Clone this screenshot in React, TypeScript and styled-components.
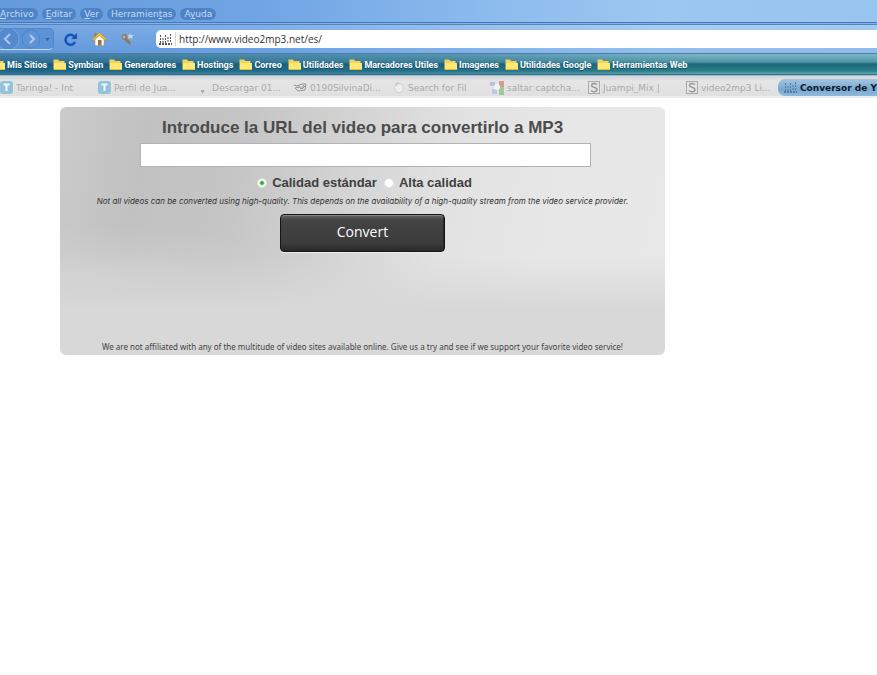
import React, { useState } from "react";
import styled, { createGlobalStyle, css } from "styled-components";

const GlobalStyle = createGlobalStyle`
  * { box-sizing: border-box; }
  body { margin: 0; background: #fefefe; overflow-x: hidden; }
`;

const Browser = styled.div`
  font-family: "DejaVu Sans", sans-serif;
  font-size: 10px;
`;

const Chrome = styled.header`
  overflow: hidden;
  background: linear-gradient(90deg, #659adc 0%, #70a5e5 30%, #8bbaed 55%, #9cc7f1 75%, #98c4f0 100%);
`;

const MenuBar = styled.nav`
  display: flex;
  gap: 4px;
  height: 22px;
  padding-top: 8px;
  margin-left: -4px;
`;

const MenuButton = styled.button`
  height: 12px;
  padding: 0 4px;
  border: 0;
  border-radius: 6px;
  background: #4e84c6;
  color: #c3dbf5;
  font: 9px/12px "DejaVu Sans", sans-serif;
  white-space: nowrap;
`;

const NavBar = styled.div`
  display: flex;
  align-items: center;
  height: 31px;
  border-top: 1px solid #4478b9;
  box-shadow: inset 0 1px #86b1e3, inset 0 2px #5585c0;
  background: linear-gradient(180deg, #ffffff22, #3f7cc922);
  padding-top: 2px;
`;

const HistoryGroup = styled.div`
  display: flex;
  align-items: center;
  width: 54px;
  height: 22px;
  margin-right: 8px;
  border: 1px solid #5287ca;
  border-left: 0;
  border-bottom-color: #c0dbf6;
  border-radius: 0 5px 5px 0;
  background: #5c92d6;
`;

const IconButton = styled.button<{ $width: number }>`
  display: flex;
  align-items: center;
  justify-content: center;
  width: ${(p) => p.$width}px;
  height: 20px;
  padding: 0;
  border: 0;
  background: none;
`;

const AddressField = styled.div`
  display: flex;
  flex: 1;
  align-items: center;
  height: 18px;
  margin-left: 20px;
  padding-left: 3px;
  gap: 3px;
  border-radius: 5px 0 0 5px;
  background: #fff;
`;

const AddressDivider = styled.span`
  width: 1px;
  height: 14px;
  background: #d4d4d4;
`;

const AddressInput = styled.input`
  flex: 1;
  min-width: 0;
  height: 16px;
  padding: 0;
  border: 0;
  outline: 0;
  background: none;
  color: #333;
  font: 10px/16px "Open Sans", sans-serif;
`;

const BookmarkBar = styled.nav`
  display: flex;
  align-items: center;
  gap: 6px;
  height: 22px;
  padding-top: 2px;
  margin-left: -8px;
  border-top: 1px solid #477fa9;
  border-bottom: 1px solid #2f718c;
  background:
    linear-gradient(90deg, #12508890, #1a5c8a60 50%, transparent 80%),
    linear-gradient(180deg, #80b6c4 0, #4f96a8 8px, #1a6777 10px, #2b8089 17px, #63a9b3 20px);
`;

const BookmarkLink = styled.a`
  display: flex;
  align-items: center;
  gap: 2px;
  color: #fff;
  font: bold 9px/14px Roboto, sans-serif;
  text-decoration: none;
  white-space: nowrap;
  text-shadow: 0 1px #164b68;
`;

const TabStrip = styled.div`
  display: flex;
  height: 23px;
  padding-top: 3px;
  border-bottom: 2px solid #ededed;
  border-top: 1px solid #a9bac4;
  background: linear-gradient(180deg, #cfd5d9, #e5e5e5 5px, #e0e0e0);
  overflow: hidden;
`;

const Tab = styled.button<{ $active?: boolean }>`
  display: flex;
  flex: 0 0 98px;
  align-items: center;
  gap: 3px;
  height: 17px;
  padding: 0;
  border: 0;
  background: none;
  color: #aaa;
  font: 9px/16px "DejaVu Sans", sans-serif;
  white-space: nowrap;
  overflow: hidden;
  svg { flex: none; }
  ${(p) =>
    p.$active &&
    css`
      flex: 1 0 98px;
      margin-left: -6px;
      padding-left: 6px;
      border-radius: 7px 0 0 7px;
      background: linear-gradient(180deg, #a5c5e1, #78a8d1 60%, #8fb9dc);
      color: #10182a;
      font-weight: bold;
    `}
`;

const Page = styled.main`
  padding: 9px 60px;
`;

const Converter = styled.form`
  display: flex;
  flex-direction: column;
  align-items: center;
  max-width: 605px;
  min-height: 248px;
  padding: 11px 8px 3px;
  border-radius: 6px;
  color: #4c4c4c;
  font-family: "Liberation Sans", Arial, sans-serif;
  background:
    linear-gradient(180deg, transparent 60%, #d8d8d8 82%),
    radial-gradient(ellipse 280px 50px at 0 68%, #d0d0d0, transparent),
    linear-gradient(102deg, #cbcbcb 0%, #c1c1c1 14%, #c6c6c6 30%, #d4d4d4 46%, #e2e2e2 62%, #e7e7e7 78%, #e8e8e8 100%);
`;

const Title = styled.label`
  font-size: 17px;
  font-weight: bold;
  line-height: 20px;
`;

const UrlInput = styled.input`
  width: 451px;
  max-width: 100%;
  height: 24px;
  margin: 5px 0 8px;
  margin-left: 6px;
  padding: 2px 4px;
  border: 1px solid #b2b2b2;
  outline: 0;
  background: #fff;
`;

const Choices = styled.div`
  display: flex;
  gap: 7px;
  padding-left: 4px;
`;

const Choice = styled.label`
  display: flex;
  align-items: center;
  gap: 5px;
  color: #404040;
  font-size: 13px;
  font-weight: bold;
  line-height: 16px;
`;

const Radio = styled.input`
  appearance: none;
  width: 10px;
  height: 10px;
  margin: 0;
  border: 1px solid #e0e5e0;
  border-radius: 50%;
  background: #fff;
  &:checked {
    border-color: #d5ecd5;
    background: radial-gradient(circle, #43954a 0 1px, #f4fff4 3px);
  }
`;

const Hint = styled.p`
  margin: 5px 0 8px;
  color: #333;
  font: italic 8px/10px Inter, sans-serif;
`;

const ConvertButton = styled.button`
  width: 165px;
  height: 38px;
  padding: 0 0 2px;
  border: 1px solid #151515;
  border-radius: 4px;
  background: linear-gradient(180deg, #676767 0, #444 5px, #3c3c3c 28px, #292929 100%);
  box-shadow: inset 0 1px #858585, inset -1px 0 #272727, 0 1px #eee;
  color: #fff;
  font: 14px/20px "Open Sans", sans-serif;
`;

const Disclaimer = styled.p`
  margin: auto 0 0;
  color: #444;
  font: 8px/10px "Noto Sans", sans-serif;
`;

const BackIcon = () => (
  <svg width="22" height="20" viewBox="0 0 22 20">
    <circle cx="8" cy="10" r="11" fill="#5489cd" stroke="#74a4df" />
    <path d="M10 5 5 10l5 5" fill="none" stroke="#a9c9ed" strokeWidth="2" />
  </svg>
);
const ForwardIcon = () => (
  <svg width="20" height="20" viewBox="0 0 20 20">
    <circle cx="9" cy="10" r="9" fill="#6094d6" stroke="#5084c8" />
    <path d="m8 6 4 4-4 4" fill="none" stroke="#aecbed" strokeWidth="2" />
  </svg>
);
const CaretIcon = () => (
  <svg width="5" height="3" viewBox="0 0 6 4"><path d="M0 0h6L3 4Z" fill="#2f65ae" /></svg>
);
const ReloadIcon = () => (
  <svg width="15" height="15" viewBox="0 0 15 15">
    <path d="M11 4.2A5 5 0 1 0 12 10" fill="none" stroke="#1553b8" strokeWidth="2.5" />
    <path d="M14 1v6H8Z" fill="#1553b8" />
  </svg>
);
const HomeIcon = () => (
  <svg width="15" height="14" viewBox="0 0 15 14">
    <path d="M3 7v6.5h9V7L7.500 3Z" fill="#fffbe7" stroke="#a19a8c" strokeWidth=".6" />
    <path d="M2.500 1.500h2v3h-2Z" fill="#a76f28" />
    <path d="M7.500.5 15 7.500l-1.300 1L7.500 3.500 1.300 8.500 0 7.500Z" fill="#f5c63d" stroke="#a57828" strokeWidth=".5" />
    <path d="M6 8h3.500v5.500H6Z" fill="#9b7147" />
  </svg>
);
const ToolsIcon = () => (
  <svg width="13" height="13" viewBox="0 0 13 13">
    <circle cx="3.500" cy="4" r="3" fill="#8b8071" /><circle cx="3" cy="4" r="1" fill="#d2d1c9" />
    <path d="m5 5 5 4-1 3-5-4Z" fill="#94785a" />
    <path d="m9 0 .8 2 2.700 0-1.500 2 .8 2-2.600-1-2.200 1 .6-2.200L6 2.500l2-.3Z" fill="#cfd5da" />
  </svg>
);
const FolderIcon = () => (
  <svg width="13" height="12" viewBox="0 0 13 12">
    <path d="M.5.5h4.500l1.300 1.500h5.200v8.500H.5Z" fill="#f4d35a" />
    <path d="M1 4h12v7H1Z" fill="#ffe873" />
    <path d="M1 10h12v1H1Z" fill="#e5b942" />
  </svg>
);
const BarsIcon = ({ color = "#555" }: { color?: string }) => (
  <svg width="13" height="13" viewBox="0 0 13 13">
    <path d="M1.500 2v8M4 5v5M6.500 2v8M9 4v6M11.500 1v9" stroke={color} strokeDasharray="2 1" />
    <path d="M0 11h13" stroke={color} strokeWidth="2" strokeDasharray="2 1" />
  </svg>
);
const TaringaIcon = () => (
  <svg width="13" height="13" viewBox="0 0 13 13">
    <rect width="13" height="13" rx="3" fill="#94c2da" />
    <path d="M3.500 3.500h6M6.500 3.500V10" stroke="#edf8fc" strokeWidth="2" />
  </svg>
);
const DotIcon = () => (
  <svg width="13" height="13" viewBox="0 0 13 13"><path d="M5 9h3v2L6 13v-2H5Z" fill="#aaa" /></svg>
);
const SketchIcon = () => (
  <svg width="13" height="13" viewBox="0 0 13 13">
    <path d="m0 4 3 1 5-2h4l-1 6-7 1-3-3 5-1M5 5l2 3 3-4M8 8l4-4" fill="none" stroke="#969696" strokeWidth="1" />
  </svg>
);
const RingIcon = () => (
  <svg width="13" height="13" viewBox="0 0 13 13">
    <circle cx="7" cy="7" r="4.500" fill="#eee" stroke="#cecece" /><path d="M3 3 7 1l-2 4" fill="#c3c3c3" />
  </svg>
);
const SearchIcon = () => (
  <svg width="14" height="14" viewBox="0 0 14 14">
    <path d="M0 1h5v4H0Z" fill="#b7c4e1" /><path d="M9 0h5v6H9Z" fill="#d59a98" />
    <path d="M9 6h5v8H9Z" fill="#9fc8a1" /><path d="M2 8h5v5H2Z" fill="#b9c7e8" />
    <circle cx="7" cy="6" r="3" fill="#f3f3ed" />
  </svg>
);
const SIcon = () => (
  <svg width="12" height="13" viewBox="0 0 12 13">
    <rect x=".5" y=".5" width="11" height="12" fill="#e5e5e5" stroke="#aaa" />
    <path d="M9 3.500C7 2 3.500 2.200 3.500 4.500S9 6 9 8.500 5 11.500 3 9.500" fill="none" stroke="#989898" strokeWidth="1.500" />
  </svg>
);

const menus: [string, string, string][] = [
  ["", "A", "rchivo"], ["", "E", "ditar"], ["", "V", "er"], ["Herramien", "t", "as"], ["A", "y", "uda"],
];
const bookmarks = ["Mis Sitios", "Symbian", "Generadores", "Hostings", "Correo", "Utilidades", "Marcadores Utiles", "Imagenes", "Utilidades Google", "Herramientas Web"];
const tabs = [
  { title: "Taringa! - Int", icon: <TaringaIcon /> },
  { title: "Perfil de Jua...", icon: <TaringaIcon /> },
  { title: "Descargar 01...", icon: <DotIcon /> },
  { title: "0190SilvinaDi...", icon: <SketchIcon /> },
  { title: "Search for Fil", icon: <RingIcon /> },
  { title: "saltar captcha...", icon: <SearchIcon /> },
  { title: "Juampi_Mix |", icon: <SIcon /> },
  { title: "video2mp3 Li...", icon: <SIcon /> },
  { title: "Conversor de Y", icon: <BarsIcon color="#5279a1" />, active: true },
];

export default function App() {
  const [quality, setQuality] = useState("standard");
  return (
    <Browser>
      <GlobalStyle />
      <Chrome>
        <MenuBar>
          {menus.map(([before, key, after]) => (
            <MenuButton key={before + key + after}>{before}<u>{key}</u>{after}</MenuButton>
          ))}
        </MenuBar>
        <NavBar>
          <HistoryGroup>
            <IconButton $width={22} aria-label="Atrás"><BackIcon /></IconButton>
            <IconButton $width={20} aria-label="Adelante"><ForwardIcon /></IconButton>
            <IconButton $width={10} aria-label="Historial"><CaretIcon /></IconButton>
          </HistoryGroup>
          <IconButton $width={17} aria-label="Recargar"><ReloadIcon /></IconButton>
          <IconButton $width={40} aria-label="Inicio"><HomeIcon /></IconButton>
          <IconButton $width={17} aria-label="Herramientas"><ToolsIcon /></IconButton>
          <AddressField>
            <BarsIcon />
            <AddressDivider />
            <AddressInput aria-label="Dirección" defaultValue="http://www.video2mp3.net/es/" />
          </AddressField>
        </NavBar>
        <BookmarkBar>
          {bookmarks.map((name) => (
            <BookmarkLink key={name} href="#"><FolderIcon />{name}</BookmarkLink>
          ))}
        </BookmarkBar>
        <TabStrip role="tablist">
          {tabs.map((tab) => (
            <Tab key={tab.title} role="tab" aria-selected={!!tab.active} $active={tab.active}>{tab.icon}{tab.title}</Tab>
          ))}
        </TabStrip>
      </Chrome>
      <Page>
        <Converter onSubmit={(e) => e.preventDefault()}>
          <Title htmlFor="video-url">Introduce la URL del video para convertirlo a MP3</Title>
          <UrlInput id="video-url" type="text" />
          <Choices>
            <Choice>
              <Radio type="radio" name="quality" checked={quality === "standard"} onChange={() => setQuality("standard")} />
              Calidad estándar
            </Choice>
            <Choice>
              <Radio type="radio" name="quality" checked={quality === "high"} onChange={() => setQuality("high")} />
              Alta calidad
            </Choice>
          </Choices>
          <Hint>Not all videos can be converted using high-quality. This depends on the availability of a high-quality stream from the video service provider.</Hint>
          <ConvertButton type="submit">Convert</ConvertButton>
          <Disclaimer>We are not affiliated with any of the multitude of video sites available online. Give us a try and see if we support your favorite video service!</Disclaimer>
        </Converter>
      </Page>
    </Browser>
  );
}
